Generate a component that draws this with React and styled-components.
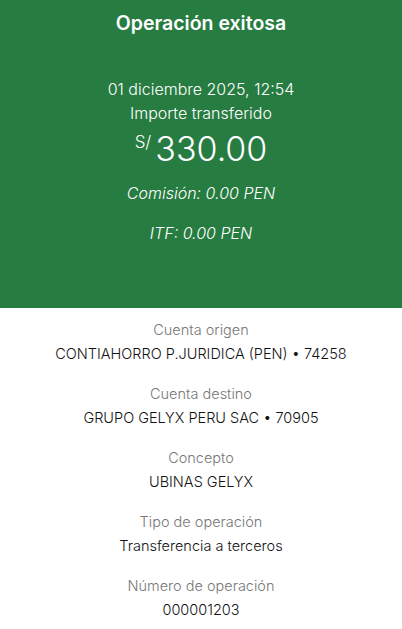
import React from "react";
import styled, { createGlobalStyle } from "styled-components";

const GlobalStyle = createGlobalStyle`
  body {
    margin: 0;
    background: #ffffff;
    font-family: "Inter", "Liberation Sans", sans-serif;
    font-weight: 300;
  }
`;

const Page = styled.div`
  width: 402px;
  display: flex;
  flex-direction: column;
`;

const Banner = styled.div`
  background: #277c41;
  color: #ffffff;
  display: flex;
  flex-direction: column;
  align-items: center;
  padding: 11px 0 63px;
`;

const Title = styled.div`
  font-size: 19.5px;
  font-weight: 600;
  line-height: 24px;
  margin-bottom: 42px;
`;

const Line = styled.div`
  font-size: 16px;
  line-height: 24px;
  font-style: ${(p) => (p.italic ? "italic" : "normal")};
  margin-top: ${(p) => p.gap || 0}px;
`;

const Amount = styled.div`
  display: flex;
  align-items: flex-start;
  gap: 4px;
  height: 52px;
  margin-top: 4px;
`;

const Currency = styled.span`
  font-size: 17px;
  line-height: 22px;
  margin-top: 2px;
`;

const Value = styled.span`
  font-size: 34px;
  font-weight: 300;
  line-height: 40px;
`;

const Details = styled.div`
  display: flex;
  flex-direction: column;
  align-items: center;
  padding: 10px 0 0;
  gap: 16px;
`;

const Field = styled.div`
  display: flex;
  flex-direction: column;
  align-items: center;
`;

const Label = styled.div`
  font-size: 14.5px;
  line-height: 24px;
  color: #777777;
`;

const Text = styled.div`
  font-size: 14.5px;
  line-height: 24px;
  color: #121212;
`;

const fields = [
  ["Cuenta origen", "CONTIAHORRO P.JURIDICA (PEN) • 74258"],
  ["Cuenta destino", "GRUPO GELYX PERU SAC • 70905"],
  ["Concepto", "UBINAS GELYX"],
  ["Tipo de operación", "Transferencia a terceros"],
  ["Número de operación", "000001203"],
];

export default function App() {
  return (
    <Page>
      <GlobalStyle />
      <Banner>
        <Title>Operación exitosa</Title>
        <Line>01 diciembre 2025, 12:54</Line>
        <Line>Importe transferido</Line>
        <Amount>
          <Currency>S/</Currency>
          <Value>330.00</Value>
        </Amount>
        <Line italic>Comisión: 0.00 PEN</Line>
        <Line italic gap={16}>ITF: 0.00 PEN</Line>
      </Banner>
      <Details>
        {fields.map(([label, text]) => (
          <Field key={label}>
            <Label>{label}</Label>
            <Text>{text}</Text>
          </Field>
        ))}
      </Details>
    </Page>
  );
}
